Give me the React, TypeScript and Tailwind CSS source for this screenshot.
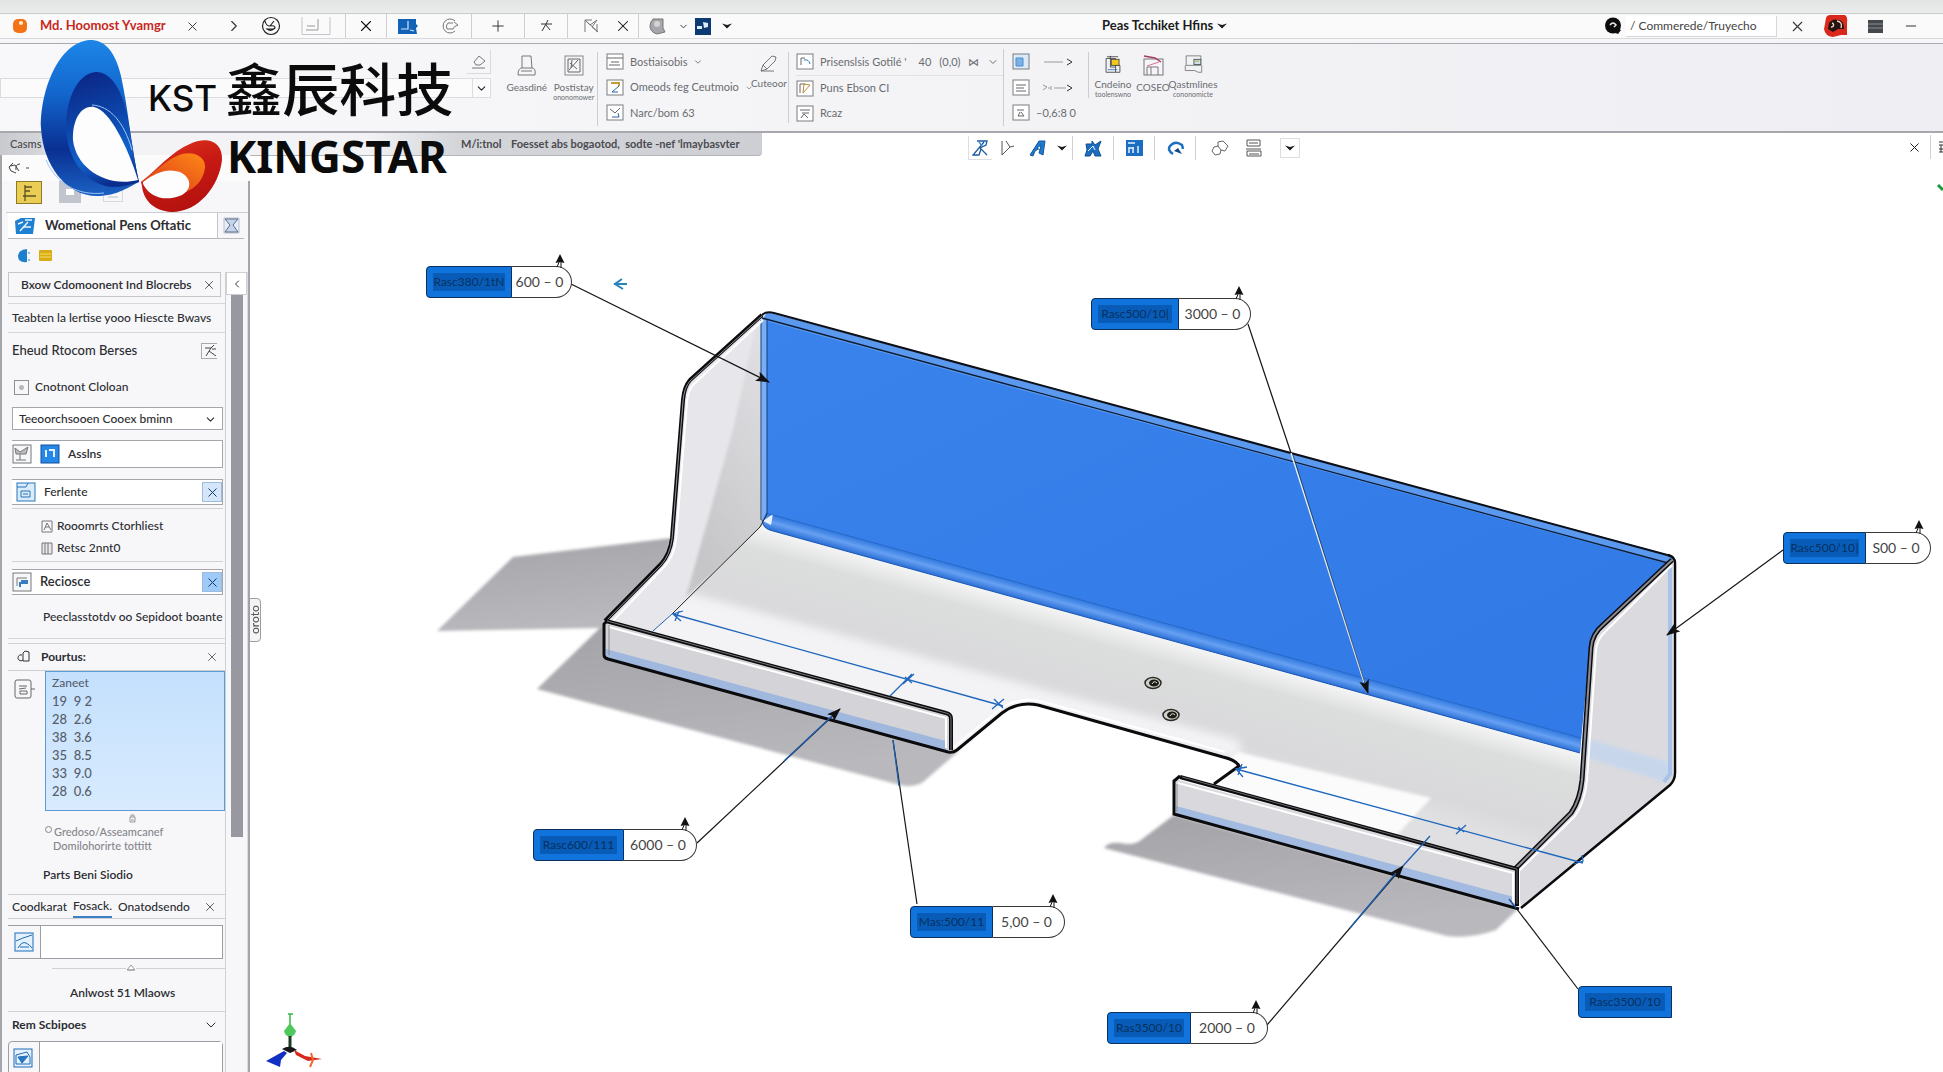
import type { ReactNode } from 'react';
import { ChevronDown, ChevronRight, ChevronLeft, Minus, Plus, X } from 'lucide-react';

type Callout = { x: number; y: number; labelW: number; label: string; valueW?: number; value?: string };

const callouts: Callout[] = [
  { x: 426, y: 266, labelW: 86, label: 'Rasc380/1tN', valueW: 60, value: '600 – 0' },
  { x: 1091, y: 298, labelW: 88, label: 'Rasc500/10|', valueW: 72, value: '3000 – 0' },
  { x: 1783, y: 532, labelW: 83, label: 'Rasc500/10]', valueW: 65, value: 'S00 – 0' },
  { x: 533, y: 829, labelW: 91, label: 'Rasc600/111', valueW: 73, value: '6000 – 0' },
  { x: 910, y: 906, labelW: 83, label: 'Mas:500/11', valueW: 72, value: '5,00 – 0' },
  { x: 1107, y: 1012, labelW: 84, label: 'Ras3500/10', valueW: 77, value: '2000 – 0' },
  { x: 1578, y: 986, labelW: 94, label: 'Rasc3500/10' },
];

const points = ['19  9 2', '28  2.6', '38  3.6', '35  8.5', '33  9.0', '28  0.6'];

// canvas starts below the ribbon and right of the side panel
const ORIGIN_X = 250;
const ORIGIN_Y = 155;

function Sep() {
  return <span className="h-6 w-px shrink-0 bg-[#cfd0d4]" />;
}

function ToolButton({ label, className, children }: { label: string; className: string; children: ReactNode }) {
  return (
    <button aria-label={label} className={`flex shrink-0 items-center justify-center ${className}`}>
      {children}
    </button>
  );
}

function TriDown() {
  return (
    <svg width="10" height="6" viewBox="0 0 10 6">
      <path d="M0 0.5L5 2L10 0.5L5 5.5Z" fill="#1b1b1b" />
    </svg>
  );
}

function TitleBar() {
  return (
    <div className="h-[30px] shrink-0 border-b border-[#a9abb0] bg-[#f6f6f8]">
      <div className="flex h-[25px] items-center border-b border-[#d8d9dc] bg-[#fafafb] text-[#333]">
        <div className="flex h-full items-center">
          <span className="flex w-10 shrink-0 justify-center">
            <svg width="16" height="16" viewBox="0 0 16 16">
              <rect x="1" y="1" width="14" height="14" rx="5" fill="#f47216" />
              <circle cx="9" cy="5" r="2" fill="#fff0d8" />
            </svg>
          </span>
          <span className="w-[132px] whitespace-nowrap text-[13px] font-bold text-[#c8281c]">Md. Hoomost Yvamgr</span>
          <ToolButton label="Close tab" className="w-10"><X size={15} strokeWidth={1.5} /></ToolButton>
          <ToolButton label="Next" className="w-[43px]"><ChevronRight size={18} strokeWidth={1.5} /></ToolButton>
          <ToolButton label="History" className="w-8">
            <svg width="20" height="20" viewBox="0 0 20 20" fill="none" stroke="#222" strokeWidth="1.2">
              <circle cx="10" cy="10" r="8.5" />
              <path d="M4 5Q5 10 9 10L13 5M9 10Q14 9 14 12Q10 16 6 13L12 13" />
            </svg>
          </ToolButton>
          <ToolButton label="Document" className="w-[58px]">
            <svg width="30" height="20" viewBox="0 0 30 20" fill="none" stroke="#999">
              <path d="M1 1V18.5H29V1" stroke="#c4c4c8" />
              <path d="M17 3V14H5M6 10H14" />
            </svg>
          </ToolButton>
          <Sep />
          <ToolButton label="Clear" className="w-10"><X size={18} strokeWidth={1.5} color="#111" /></ToolButton>
          <Sep />
          <ToolButton label="Part" className="w-[42px]">
            <svg width="20" height="17" viewBox="0 0 20 17">
              <path d="M0 1H18V6L20 8L18 10L19 16H0Z" fill="#1263b8" />
              <path d="M10 3V11H3M12 12L16 13" stroke="#cfe4fa" strokeWidth="1.2" fill="none" />
            </svg>
          </ToolButton>
          <ToolButton label="Rotate" className="w-[42px]">
            <svg width="18" height="16" viewBox="0 0 18 16" fill="none" stroke="#777">
              <path d="M14 3A7 7 0 1 0 14 13M12 5H7Q4 8 6 11H12Q13 8 17 7L13 4" />
            </svg>
          </ToolButton>
          <Sep />
          <ToolButton label="Add" className="w-[52px]"><Plus size={18} strokeWidth={1.3} /></ToolButton>
          <Sep />
          <ToolButton label="Fit" className="w-[42px]">
            <svg width="13" height="14" viewBox="0 0 13 14" fill="none" stroke="#333">
              <path d="M1 5H12M8 1L6 5L2 12M6 6L10 11" />
            </svg>
          </ToolButton>
          <Sep />
          <ToolButton label="Sketch" className="w-10 pl-2">
            <svg width="16" height="16" viewBox="0 0 16 16" fill="none" stroke="#777">
              <path d="M1 14V2H8M1 2L6 7L13 2L8 9L14 14ZM13 6V14" />
            </svg>
          </ToolButton>
          <ToolButton label="Remove" className="w-[30px]"><X size={18} strokeWidth={1.4} color="#111" /></ToolButton>
          <Sep />
          <ToolButton label="View style" className="w-9">
            <svg width="17" height="17" viewBox="0 0 17 17">
              <path d="M4 1H14V10L16 14L8 16Q1 14 1 8Q1 4 4 1Z" fill="#a6a7aa" stroke="#777" />
              <circle cx="8" cy="6" r="3" fill="#d4d4d6" />
            </svg>
          </ToolButton>
          <ToolButton label="View menu" className="w-4"><ChevronDown size={11} /></ToolButton>
          <ToolButton label="Scene" className="w-6">
            <svg width="16" height="17" viewBox="0 0 16 17">
              <rect width="16" height="17" fill="#0c3a72" />
              <path d="M2 8H7V11H2ZM8 4L13 5V9L9 10Z" fill="#dcebfa" />
            </svg>
          </ToolButton>
          <ToolButton label="Scene menu" className="w-6"><TriDown /></ToolButton>
        </div>
        <button className="ml-[363px] flex items-center gap-1 whitespace-nowrap text-[13px] font-bold text-[#1c1c1c]">
          Peas Tcchiket Hfins <TriDown />
        </button>
        <div className="ml-auto flex h-full items-center gap-1 pr-4">
          <svg width="18" height="18" viewBox="0 0 18 18">
            <circle cx="9" cy="8.5" r="8" fill="#0d0d0d" />
            <path d="M10 10L17 13L14 17L9 15Z" fill="#0d0d0d" />
            <path d="M6 8Q9 4 12 8L10 10" stroke="#eee" strokeWidth="1.5" fill="none" />
          </svg>
          <input
            aria-label="Search"
            defaultValue="/ Commerede/Truyecho"
            className="h-[21px] w-[151px] border-r border-b border-[#d5d5da] bg-white pl-1 text-xs text-[#444]"
          />
          <ToolButton label="Clear search" className="w-8"><X size={17} strokeWidth={1.5} /></ToolButton>
          <ToolButton label="Account" className="w-[38px]">
            <svg width="24" height="22" viewBox="0 0 24 22">
              <path d="M6 0H21Q24 2 23 8V20H17L9 22Q1 21 0 14Q1 9 2 3Q3 0 6 0Z" fill="#d9291d" />
              <path d="M5 8Q9 3 14 5Q20 5 20 14H14L9 17L4 14Z" fill="#241310" />
              <path d="M7 12A2 2 0 1 0 8 8M13 6Q19 7 17 13" stroke="#f3d9c0" fill="none" strokeWidth="1.4" />
            </svg>
          </ToolButton>
          <ToolButton label="Menu" className="w-8">
            <svg width="15" height="13" viewBox="0 0 15 13">
              <rect width="15" height="13" fill="#44474c" />
              <path d="M0 4H15M0 8H15" stroke="#8b8e94" />
            </svg>
          </ToolButton>
          <ToolButton label="Minimize" className="w-8"><Minus size={16} strokeWidth={1.5} /></ToolButton>
        </div>
      </div>
    </div>
  );
}

function RibbonIcon({ children, tint = '#fff' }: { children: ReactNode; tint?: string }) {
  return (
    <svg width="18" height="18" viewBox="0 0 18 18" fill="none" stroke="#666" className="shrink-0">
      <rect x="1" y="1" width="16" height="15" fill={tint} stroke="#7a7c80" />
      {children}
    </svg>
  );
}

function RibbonRow({ icon, text, menu }: { icon: ReactNode; text: string; menu?: boolean }) {
  return (
    <button className="flex h-[26px] items-center gap-1.5 whitespace-nowrap text-[11px] text-[#6a6c70]">
      {icon}
      {text}
      {menu && <ChevronDown size={10} />}
    </button>
  );
}

function RibbonBig({ icon, text, sub, className }: { icon: ReactNode; text: string; sub?: string; className: string }) {
  return (
    <button className={`-mt-1 flex flex-col items-center whitespace-nowrap pt-[7px] text-[#6a6c70] ${className}`}>
      {icon}
      <span className="mt-1 text-[10px] leading-3">{text}</span>
      {sub && <span className="text-[7px] leading-2">{sub}</span>}
    </button>
  );
}

function Ribbon() {
  return (
    <div className="flex h-[89px] shrink-0 border-b-2 border-[#a7a8ad] bg-gradient-to-r from-[#f8f8fa] to-[#efeff3]">
      <div className="flex w-[491px] shrink-0 flex-col items-end pt-1.5">
        <button aria-label="Erase" className="flex h-6 w-6 items-center justify-center border-r border-b border-[#dadade]">
          <svg width="16" height="16" viewBox="0 0 16 16" fill="none" stroke="#777">
            <path d="M8 2L14 7L9 11H5L3 8ZM1 14H14" />
          </svg>
        </button>
        <div className="mt-1 flex h-5 w-full items-center justify-end border border-[#dcdce0] bg-[#fbfbfc]">
          <button aria-label="Open list" className="flex h-full w-[18px] items-center justify-center border-l border-[#dcdce0]">
            <ChevronDown size={13} color="#222" />
          </button>
        </div>
      </div>
      <div className="my-2 ml-3 flex h-[74px] w-[95px] shrink-0 border-r border-[#cccdd2]">
        <RibbonBig
          className="w-12"
          text="Geasdiné"
          icon={
            <svg width="20" height="22" viewBox="0 0 20 22" fill="none" stroke="#777">
              <path d="M5 1H14L15 13H5ZM5 13Q1 13 1 20H18Q19 13 15 13M4 16H15" />
            </svg>
          }
        />
        <RibbonBig
          className="w-[47px]"
          text="Postistay"
          sub="ononomower"
          icon={
            <svg width="20" height="22" viewBox="0 0 20 22" fill="none" stroke="#888">
              <rect x="1" y="1" width="18" height="19" />
              <path d="M4 4H16V17H4ZM5 15L14 5M6 8L13 14M8 5L7 13" stroke="#666" />
            </svg>
          }
        />
      </div>
      <div className="my-[5px] flex w-[155px] shrink-0 flex-col pl-2">
        <RibbonRow menu text="Bostiaisobis" icon={<RibbonIcon><path d="M1 5H17M5 9H13M3 12H14" /></RibbonIcon>} />
        <RibbonRow menu text="Omeods feg Ceutmoio" icon={<RibbonIcon><path d="M5 4H13V7" stroke="#c79a3a" strokeWidth="2" /><path d="M13 7L6 13H12" stroke="#31639c" /></RibbonIcon>} />
        <RibbonRow text="Narc/bom 63" icon={<RibbonIcon><path d="M4 5L9 9L14 4" /><path d="M6 13H13L12 9" stroke="#31639c" /></RibbonIcon>} />
      </div>
      <div className="my-2 w-9 shrink-0 border-r border-[#cccdd2]">
        <RibbonBig
          className="w-8"
          text="Cuteoor"
          icon={
            <svg width="20" height="18" viewBox="0 0 20 18" fill="none" stroke="#777">
              <path d="M2 16L4 10L13 1L17 2L16 6L8 14ZM2 16H15M4 10L8 14" />
            </svg>
          }
        />
      </div>
      <div className="my-[5px] flex w-[215px] shrink-0 flex-col border-r border-[#cccdd2] pl-[7px]">
        <div className="flex items-center border-b border-[#e2e2e6]">
          <RibbonRow text="Prisenslsis Gotilé '" icon={<RibbonIcon><path d="M5 5V12M5 5H9" /><path d="M8 7Q13 6 14 11" stroke="#2f78c4" /></RibbonIcon>} />
          <span className="ml-3 flex items-center gap-2 text-[11px] text-[#6a6c70]">
            40 <span>(0,0)</span> ⋈ <ChevronDown size={12} />
          </span>
        </div>
        <RibbonRow text="Puns Ebson CI" icon={<RibbonIcon><path d="M4 13V4H9" /><path d="M8 4L14 5L7 13Z" stroke="#b98c32" /></RibbonIcon>} />
        <RibbonRow text="Rcaz" icon={<RibbonIcon><path d="M4 5H14M6 8H13M5 13L8 9L12 13" /></RibbonIcon>} />
      </div>
      <div className="my-[5px] flex w-[84px] shrink-0 flex-col pl-2">
        {['M4 5H11V13H4Z', 'M4 6H14M4 9H12M4 12H14'].map((d, i) => (
          <button key={d} aria-label="Line style" className="flex h-[26px] items-center gap-3">
            <RibbonIcon tint={i === 0 ? '#dce9f7' : '#fff'}><path d={d} stroke={i === 0 ? '#4a8ed0' : '#666'} fill={i === 0 ? '#7db0e2' : 'none'} /></RibbonIcon>
            <svg width="32" height="8" viewBox="0 0 32 8" fill="none" stroke="#777">
              <path d={i === 0 ? 'M2 4H21' : 'M1 1L5 3L1 6M6 4H8M9 2V6M12 4H24'} stroke="#999" />
              <path d="M25 1L30 4L25 7" stroke="#333" />
            </svg>
          </button>
        ))}
        <RibbonRow text="–0,6:8 0" icon={<RibbonIcon><path d="M5 6H12M8 8L6 12H12L9 8" /></RibbonIcon>} />
      </div>
      <div className="mt-2 flex h-[46px] border-l border-[#cccdd2] pl-1">
        <RibbonBig
          className="w-10"
          text="Cndeino"
          sub="toolenswno"
          icon={
            <svg width="18" height="22" viewBox="0 0 18 22" fill="none" stroke="#444">
              <path d="M1 4H12V20H1Z" fill="#eef2f8" /><path d="M12 12H17V20H12" /><rect x="7" y="5" width="9" height="7" fill="#f2c91a" /><path d="M2 2H15M6 1V14H12" /><path d="M3 17H14" stroke="#3a6fb0" />
            </svg>
          }
        />
        <RibbonBig
          className="w-10"
          text="COSEO"
          icon={
            <svg width="21" height="22" viewBox="0 0 21 22" fill="none" stroke="#777">
              <rect x="1" y="4" width="19" height="16" fill="#f6f4f8" /><path d="M1 1L12 3L18 7" stroke="#a33d5c" strokeWidth="1.5" /><path d="M4 11L16 7" stroke="#d9709c" /><path d="M4 20V12H15V20M8 12V20" />
            </svg>
          }
        />
        <RibbonBig
          className="w-10"
          text="Qastmlines"
          sub="cononomicte"
          icon={
            <svg width="21" height="22" viewBox="0 0 21 22" fill="none" stroke="#777">
              <path d="M2 1H19V12H2ZM1 12V18H12L16 20H20V12" fill="#f1f2f4" /><rect x="11" y="5" width="8" height="6" fill="#cfe0e8" stroke="#455" /><path d="M12 7H17" stroke="#b9a02c" />
            </svg>
          }
        />
      </div>
    </div>
  );
}

function TabStrip() {
  return (
    <div className="flex h-[22px] shrink-0 items-start">
      <div className="flex h-[23px] w-[762px] shrink-0 items-center whitespace-nowrap rounded-br border-b border-[#b4b5ba] bg-[linear-gradient(90deg,#c9cacf_0,#d4d5d9_5%,#f3f3f5_9%,#f3f3f5_48%,#d3d5d9_60%,#cdcfd4_100%)] text-[11px] font-bold text-[#4a4b50]">
        <span className="w-[461px] pl-2.5 font-medium">Casms</span>
        <span className="w-[50px]">M/i:tnol</span>
        <span>Foesset abs bogaotod,&nbsp; sodte -nef 'lmaybasvter</span>
      </div>
      <div className="relative ml-[206px] mt-[3px] flex h-6 items-center">
        <ToolButton label="Zoom fit" className="h-full w-6 border-b border-l border-[#dedee2]">
          <svg width="18" height="18" viewBox="0 0 18 18" fill="none" stroke="#1d5c9e" strokeWidth="1.3">
            <path d="M5 2H15L14 6L8 9L15 16M12 3L1 16H7L9 10" /><path d="M7 3L10 7" stroke="#3b8be0" />
          </svg>
        </ToolButton>
        <ToolButton label="Select" className="w-8">
          <svg width="14" height="16" viewBox="0 0 14 16" fill="none" stroke="#444"><path d="M5 1L9 7L13 6M9 7L1 15M1 1V15" strokeWidth="0.9" /></svg>
        </ToolButton>
        <ToolButton label="Section view" className="w-7">
          <svg width="18" height="18" viewBox="0 0 18 18" fill="#1c7bd0" stroke="#16599c"><path d="M1 16L10 2H16L14 16L10 14L12 8L6 12L4 17Z" /><path d="M8 9L12 6L11 11Z" fill="#fff" /></svg>
        </ToolButton>
        <ToolButton label="View options" className="w-5"><TriDown /></ToolButton>
        <Sep />
        <ToolButton label="Display" className="w-10">
          <svg width="18" height="17" viewBox="0 0 18 17" fill="#1a6fc2" stroke="#134f8c"><path d="M2 4H8V1L11 5L17 1L14 9L17 16H11L9 11L6 16H1L3 10Z" /><path d="M4 11L9 6L11 10" fill="none" stroke="#fff" /></svg>
        </ToolButton>
        <Sep />
        <ToolButton label="Scene" className="w-10">
          <svg width="17" height="18" viewBox="0 0 17 18"><rect y="1" width="17" height="16" fill="#1a6fc2" /><path d="M2 4H9M3 8V14M7 8V14M3 9H8M12 7V14" stroke="#e6f2ff" strokeWidth="1.5" fill="none" /></svg>
        </ToolButton>
        <Sep />
        <ToolButton label="Rotate view" className="w-10">
          <svg width="17" height="17" viewBox="0 0 17 17" fill="none" stroke="#1a6fc2" strokeWidth="2.5"><path d="M6 14Q0 10 3 6Q8 0 15 5L16 9" /><path d="M7 11L11 8L15 14Z" fill="#114a86" stroke="none" /></svg>
        </ToolButton>
        <Sep />
        <ToolButton label="Hide" className="w-12">
          <svg width="18" height="16" viewBox="0 0 18 16" fill="none" stroke="#555"><path d="M7 2L12 1L17 6L14 11L10 10L9 14L4 15L1 11L3 7L7 6ZM7 6L10 10" strokeWidth="0.9" /></svg>
        </ToolButton>
        <ToolButton label="Layers" className="w-5">
          <svg width="18" height="18" viewBox="0 0 18 18" fill="none" stroke="#555"><path d="M2 1H15V7H2ZM1 10H16M2 12H16V17H2ZM4 4H13M4 15H14" /></svg>
        </ToolButton>
        <ToolButton label="More" className="ml-4 h-5 w-5 border border-[#dedee2]">
          <TriDown />
        </ToolButton>
      </div>
      <div className="ml-auto mt-1 flex h-5 items-center">
        <ToolButton label="Close view" className="w-8"><X size={15} strokeWidth={1.6} color="#222" /></ToolButton>
        <Sep />
        <span className="w-3 overflow-hidden pl-2">
          <svg width="12" height="12" viewBox="0 0 12 12" stroke="#333" fill="none"><path d="M0 1H6M0 4H6M0 8H6M0 11H6M2 4V11" /></svg>
        </span>
      </div>
    </div>
  );
}

function PanelIcon({ children, tone = '#777', fill = '#f6f7f9' }: { children: ReactNode; tone?: string; fill?: string }) {
  return (
    <svg width="20" height="20" viewBox="0 0 20 20" fill="none" stroke={tone} className="shrink-0">
      <rect x="1" y="1" width="18" height="18" fill={fill} />
      {children}
    </svg>
  );
}

function CloseBox({ className }: { className: string }) {
  return (
    <button aria-label="Clear" className={`ml-auto flex h-5 w-5 items-center justify-center border border-[#9dbbdd] ${className}`}>
      <X size={15} strokeWidth={1.6} color="#163a66" />
    </button>
  );
}

function SidePanel() {
  return (
    <aside className="relative flex w-[250px] shrink-0 flex-col border-l-2 border-[#a4a5aa] bg-[#f7f7fa] text-xs font-medium text-[#2c2d31]">
      <div className="flex h-[26px] shrink-0 items-center bg-[#fbfbfc] pl-1.5 text-[#444]">
        <svg width="24" height="12" viewBox="0 0 24 12" fill="none" stroke="#444">
          <path d="M5 1L1 5L3 9L8 11M2 4L7 3L11 9M12 2Q7 2 8 8M18 6H21" />
        </svg>
      </div>
      <div className="flex min-h-0 flex-1 flex-col border-r-2 border-[#a4a5aa]">
        <div className="ml-1 flex h-8 shrink-0 items-start border-b border-[#cccdd2]">
          <ToolButton label="Feature tree" className="ml-2.5 h-[23px] w-[26px] border border-[#8d7a25] bg-[#e9cd55]">
            <svg width="18" height="18" viewBox="0 0 18 18" fill="none" stroke="#5c5220"><path d="M5 1V17M5 3H12M5 7H10M3 12H16" strokeWidth="1.3" /></svg>
          </ToolButton>
          <ToolButton label="Properties" className="ml-[17px] h-[22px] w-[22px] bg-[#c3c5ce]">
            <svg width="10" height="8" viewBox="0 0 10 8"><rect x="1" y="1" width="8" height="6" fill="#fff" /></svg>
          </ToolButton>
          <ToolButton label="Configurations" className="ml-[22px] h-[21px] w-5 border border-[#d8d8dc]">
            <svg width="14" height="14" viewBox="0 0 14 14" fill="none" stroke="#bbb"><path d="M1 4L6 9L12 3M2 12H12" /></svg>
          </ToolButton>
        </div>
        <div className="ml-1.5 mr-1 flex h-[26px] shrink-0 items-center border-b border-[#b6b7bc]">
          <div className="flex h-full flex-1 items-center border-r border-[#c3c4c9] bg-white pl-[7px]">
            <svg width="20" height="18" viewBox="0 0 20 18"><path d="M0 4L6 1H20L18 17H1Z" fill="#1f7fd0" /><path d="M3 7L8 5M5 14L13 5M9 10H16M10 3H17" stroke="#eaf5ff" strokeWidth="1.5" /></svg>
            <input aria-label="Feature name" defaultValue="Wometional Pens Oftatic" className="ml-2.5 w-40 bg-transparent text-[13px] font-bold" />
          </div>
          <ToolButton label="Filter" className="w-[26px]">
            <svg width="17" height="17" viewBox="0 0 17 17" fill="#c4d4ea" stroke="#5b6c86"><path d="M1 1H16V16H1Z" fill="#e8eef7" stroke="#b5c0d0" /><path d="M2 2H15L10 8L15 15H2L7 8Z" /></svg>
          </ToolButton>
        </div>
        <div className="flex h-[33px] shrink-0 items-center gap-2 pl-[15px]">
          <svg width="14" height="14" viewBox="0 0 14 14"><path d="M10 0V13Q1 14 1 7Q1 1 10 0Z" fill="#1d80cf" /><path d="M12 3V5M12 10V12" stroke="#1d80cf" /></svg>
          <svg width="13" height="11" viewBox="0 0 13 11"><rect width="13" height="11" rx="1" fill="#d8ac12" /><path d="M1 4H12M1 7H12" stroke="#f5e06a" /></svg>
        </div>
        <div className="flex min-h-0 flex-1">
          <div className="flex w-[224px] shrink-0 flex-col overflow-hidden border-r border-[#cfd0d4] pl-1.5">
            <div className="mr-1 flex h-[25px] shrink-0 items-center whitespace-nowrap border border-[#c6c7cc] pl-3 font-semibold">
              Bxow Cdomoonent Ind Blocrebs
              <button aria-label="Close" className="ml-auto mr-1"><X size={14} strokeWidth={1.3} /></button>
            </div>
            <p className="mt-[6px] flex h-[30px] shrink-0 items-center whitespace-nowrap border-y border-[#d6d7db] pl-1">Teabten la lertise yooo Hiescte Bwavs</p>
            <div className="flex h-[36px] shrink-0 items-center pl-1 pr-2 text-[13px]">
              Eheud Rtocom Berses
              <button aria-label="Pick" className="ml-auto h-4 w-4 border border-r-0 border-[#a8a9ae]">
                <svg width="15" height="14" viewBox="0 0 15 14" fill="none" stroke="#444"><path d="M3 4H9L12 1M9 4L4 12M7 7L14 12M10 5L14 5" /></svg>
              </button>
            </div>
            <label className="flex h-[36px] shrink-0 items-center gap-1.5 pl-1.5">
              <input type="checkbox" className="h-[15px] w-[15px] appearance-none border border-[#8f9095] bg-[radial-gradient(circle,#b5b6ba_0_2px,#f7f7fa_3px)]" />
              Cnotnont Cloloan
            </label>
            <div className="relative ml-1 mr-0.5 mt-[2px] h-[23px] shrink-0">
              <select aria-label="Constraint" className="h-full w-full appearance-none border border-[#a5a6ab] bg-white pl-1.5">
                <option>Teeoorchsooen Cooex bminn</option>
              </select>
              <ChevronDown size={13} className="pointer-events-none absolute right-1.5 top-1.5" />
            </div>
            <div className="ml-1 mr-0.5 mt-[10px] flex h-7 shrink-0 items-center gap-2 border border-l-0 border-[#a5a6ab] bg-white">
              <span className="flex"><PanelIcon><path d="M3 4L8 8L16 3L14 10H4ZM8 10V16M4 16H14" fill="#bbb" /></PanelIcon></span>
              <PanelIcon tone="#0f529e" fill="#2687e6"><path d="M6 6V13M9 6H14V13" stroke="#e4f1ff" strokeWidth="2" /></PanelIcon>
              <span className="font-semibold">Asslns</span>
            </div>
            <div className="ml-1 mr-0.5 mt-[11px] flex h-[26px] shrink-0 items-center gap-2 border border-l-0 border-[#a5a6ab] bg-white pl-1">
              <PanelIcon tone="#2774bd" fill="#dcebfa"><path d="M1 5H10L12 1M5 9H14V15H5ZM7 12H12" /></PanelIcon>
              <span>Ferlente</span>
              <CloseBox className="bg-[#d5e6fa]" />
            </div>
            <div className="ml-1 mr-0.5 mt-[3px] flex h-[54px] shrink-0 flex-col justify-center gap-1.5 border-y border-[#d0d1d5] pl-[29px] pt-1">
              <span className="flex items-center gap-1 leading-4">
                <svg width="12" height="13" viewBox="0 0 12 13" fill="none" stroke="#777"><path d="M1 1H11V12H1ZM6 3L3 10M6 3L10 10M4 7H8" /></svg>
                Rooomrts Ctorhliest
              </span>
              <span className="flex items-center gap-1 leading-4">
                <svg width="12" height="13" viewBox="0 0 12 13" fill="#e8e8ee" stroke="#777"><path d="M1 1H11V12H1ZM4 1V12M7 1V12" /></svg>
                Retsc 2nnt0
              </span>
            </div>
            <div className="ml-1 mr-0.5 mt-[7px] flex h-[26px] shrink-0 items-center gap-2 border border-l-0 border-[#a5a6ab] bg-white">
              <PanelIcon><path d="M5 6H15M5 6V14" /><path d="M9 9H15V11H8V15" stroke="#3a7cc0" strokeWidth="2" /></PanelIcon>
              <span className="text-[13px] font-semibold">Reciosce</span>
              <CloseBox className="bg-[#9dcaf7]" />
            </div>
            <p className="flex h-[44px] shrink-0 items-center whitespace-nowrap border-b border-[#d6d7db] pl-[35px]">Peeclasstotdv oo Sepidoot boante</p>
            <div className="mt-1 flex h-7 shrink-0 items-center border-y border-[#cfd0d4] pl-2">
              <svg width="16" height="14" viewBox="0 0 16 14" fill="none" stroke="#333"><path d="M6 5A3 3 0 1 0 7 10M7 3V11H13V2L9 1Z" /></svg>
              <span className="ml-[9px] font-bold">Pourtus:</span>
              <button aria-label="Close section" className="ml-auto mr-1.5"><X size={14} strokeWidth={1.2} /></button>
            </div>
            <div className="flex h-[140px] shrink-0">
              <div className="w-[37px] pl-1.5 pt-2">
                <svg width="21" height="20" viewBox="0 0 21 20" fill="none" stroke="#666"><rect x="1" y="1" width="16" height="18" rx="2" /><path d="M17 10H21M5 7H13M5 10L12 9M6 15V12H13V15Z" /></svg>
              </div>
              <ul className="flex-1 whitespace-pre border border-[#5b9bd8] bg-gradient-to-b from-[#c4e0fd] to-[#d8ebfe] pl-1.5 pt-[3px] text-[13px] text-[#56606c]">
                <li className="h-[17px] text-xs leading-4">Zaneet</li>
                {points.map((p) => (
                  <li key={p} className="h-[18px] leading-[18px]">{p}</li>
                ))}
              </ul>
            </div>
            <div className="flex h-[14px] shrink-0 justify-center pl-8 pt-[3px]">
              <svg width="7" height="9" viewBox="0 0 7 9" fill="none" stroke="#999"><path d="M1 3H6V8H1ZM2 3V1H5V3M2 6H5" /></svg>
            </div>
            <div className="h-[31px] shrink-0 pl-[37px] text-[11px] leading-[14px] text-[#85868b]">
              <label className="flex gap-0.5">
                <input type="radio" className="mt-px h-[7px] w-[7px] appearance-none rounded-full border border-[#888]" />
                Gredoso/Asseamcanef
              </label>
              <p className="pl-2">Domilohorirte tottitt</p>
            </div>
            <p className="flex h-[37px] shrink-0 items-center pl-[35px] font-semibold">Parts Beni Siodio</p>
            <div className="mt-px flex h-[25px] shrink-0 items-center gap-1.5 whitespace-nowrap border-y border-[#cfd0d4] pl-1">
              <button>Coodkarat</button>
              <button className="h-full border-b-2 border-[#3c7fc6]">Fosack.</button>
              <button>Onatodsendo</button>
              <button aria-label="Close tabs" className="ml-auto mr-2"><X size={14} strokeWidth={1.3} /></button>
            </div>
            <div className="mr-0.5 mt-[6px] flex h-[34px] shrink-0 items-center border border-l-0 border-[#9d9ea3] pl-1.5">
              <PanelIcon tone="#1f6db8" fill="#e4f1fd"><path d="M2 9L9 6L18 3M4 16Q8 9 12 11T18 16M6 15H15" /></PanelIcon>
              <input aria-label="Face" className="ml-1.5 h-full w-0 flex-1 border-l border-[#9d9ea3] bg-white" />
            </div>
            <div className="ml-11 mt-[2px] flex h-[14px] shrink-0 items-center">
              <span className="h-px w-[74px] bg-[#d0d1d5]" />
              <svg width="10" height="8" viewBox="0 0 10 8" fill="#fff" stroke="#999"><path d="M1 6L5 1L9 6ZM2 6H8" /></svg>
              <span className="h-px flex-1 bg-[#d0d1d5]" />
            </div>
            <p className="flex h-[36px] shrink-0 items-center pl-[62px] font-semibold">Anlwost 51 Mlaows</p>
            <div className="flex h-[27px] shrink-0 items-center border-t border-[#cfd0d4] pl-1 font-bold">
              Rem Scbipoes
              <button aria-label="Expand" className="ml-auto mr-1.5"><ChevronDown size={16} strokeWidth={1.5} /></button>
            </div>
            <div className="mr-0.5 mt-[3px] flex h-[34px] shrink-0 items-center rounded-t border border-[#9d9ea3] pl-1">
              <PanelIcon tone="#1f6db8" fill="#e4f1fd"><path d="M3 7L14 4L17 9V16H3Z" /><path d="M5 9L15 8L9 15Z" fill="#2a78c4" /></PanelIcon>
              <input aria-label="Edge" className="ml-1.5 h-full w-0 flex-1 border-l border-[#9d9ea3] bg-white" />
            </div>
          </div>
          <div className="flex flex-1 flex-col items-center border-r border-[#dcdce0]">
            <button aria-label="Collapse" className="flex h-[23px] w-full shrink-0 items-center justify-center border border-[#cfd0d4] bg-white">
              <ChevronLeft size={12} color="#333" />
            </button>
            <div className="h-[542px] w-3 bg-[#9899a0]" />
          </div>
        </div>
      </div>
      <button className="absolute -right-[11px] top-[443px] h-11 w-3 rounded-l border border-[#9d9ea3] bg-[#f4f4f6] text-xs leading-[10px] text-[#555] [writing-mode:vertical-rl] rotate-180">
        oroto
      </button>
    </aside>
  );
}

function CalloutTag({ item }: { item: Callout }) {
  return (
    <div
      className="absolute flex h-8 items-stretch"
      style={{ left: item.x - ORIGIN_X, top: item.y - ORIGIN_Y }}
    >
      <button
        className="flex items-center justify-center rounded-l border border-[#0d2f5c] bg-[#1173dc] p-1.5"
        style={{ width: item.labelW }}
      >
        <span className="flex h-full w-full items-center justify-center bg-[#085cb8] text-xs text-[#06315f]">{item.label}</span>
      </button>
      {item.value && (
        <span
          className="relative flex items-center justify-center whitespace-nowrap rounded-r-full border border-l-0 border-[#3a3a3a] bg-white pr-1 text-sm text-[#444]"
          style={{ width: item.valueW }}
        >
          {item.value}
          <svg width="10" height="14" viewBox="0 0 10 14" className="absolute -top-[13px] right-1.5">
            <path d="M5 0L9.5 9L5 8L0.5 9Z" fill="#111" />
            <path d="M5 6L2 13M6 6V14" stroke="#111" fill="none" />
          </svg>
        </span>
      )}
    </div>
  );
}

function Model() {
  return (
    <svg width="1693" height="917" viewBox="250 155 1693 917" fill="none" className="block">
      <defs>
        <filter id="soft" x="-10%" y="-10%" width="120%" height="120%"><feGaussianBlur stdDeviation="1.500" /></filter>
        <filter id="softer" x="-20%" y="-20%" width="140%" height="140%"><feGaussianBlur stdDeviation="5" /></filter>
        <linearGradient id="shadow" x1="0" y1="0" x2="0.300" y2="1">
          <stop offset="0" stopColor="#a2a2a7" /><stop offset="1" stopColor="#b9b9bd" />
        </linearGradient>
        <linearGradient id="back" x1="0" y1="0" x2="1" y2="1">
          <stop offset="0" stopColor="#3a83ec" /><stop offset="1" stopColor="#3079e6" />
        </linearGradient>
        <linearGradient id="bend" gradientUnits="userSpaceOnUse" x1="1000" y1="577.600" x2="995.970" y2="592.200">
          <stop offset="0" stopColor="#2f78df" /><stop offset="0.500" stopColor="#66a0f2" /><stop offset="1" stopColor="#2b6fd6" />
        </linearGradient>
        <linearGradient id="floor" gradientUnits="userSpaceOnUse" x1="1000" y1="590" x2="972.400" y2="690">
          <stop offset="0" stopColor="#f8f8f9" /><stop offset="0.250" stopColor="#dcdddd" /><stop offset="0.800" stopColor="#d9d9db" /><stop offset="1" stopColor="#e0e0e2" />
        </linearGradient>
        <linearGradient id="shade" x1="1" y1="0" x2="0.600" y2="1">
          <stop offset="0" stopColor="#e2e2e6" /><stop offset="1" stopColor="#c6c6c8" />
        </linearGradient>
        <clipPath id="floorClip">
          <path d="M762 525L1580 752L1579 790L1570 815L1515 868L1213 784L1239 763L1223 755L1038 703Q1020 700 1002 712L954 752L950 714L607 621Z" />
        </clipPath>
        <clipPath id="leftClip"><path d="M762 318L687 385L683 400L672 540L663 562L607 620L653 631L762 525Z" /></clipPath>
        <marker id="tip" viewBox="0 0 14 10" refX="13" refY="5" markerWidth="14" markerHeight="10" markerUnits="userSpaceOnUse" orient="auto"><path d="M0 0L14 5L0 10L3 5Z" fill="#111" /></marker>
      </defs>

      {/* ground shadows */}
      <g fill="url(#shadow)" filter="url(#soft)">
        <path d="M437 631L513 557L672 538L664 564L600 628Z" />
        <path d="M537 689L604 624L604 657L949 752L960 750L922 783Q912 788 900 785Z" />
        <path d="M1104 848Q1108 842 1120 843Q1134 846 1141 840L1174 815L1518 909L1496 930Q1470 939 1447 936Z" />
      </g>

      {/* floor */}
      <path d="M762 525L1580 752L1579 790L1570 815L1515 868L1213 784L1239 763L1223 755L1038 703Q1020 700 1002 712L954 752L950 714L607 621Z" fill="url(#floor)" />
      <g clipPath="url(#floorClip)">
        <path d="M685 592L1045 690L1240 740L1240 760L1020 710L950 765L600 640Z" fill="#f3f3f5" filter="url(#softer)" />
        <path d="M1238 752L1431 798L1396 836L1200 784Z" fill="#fbfbfc" filter="url(#soft)" />
      </g>

      {/* left wall */}
      <path d="M762 316L687 384Q684 390 683 400L672 540Q669 556 660 566L607 620L653 631L762 525Z" fill="#e7e7eb" />
      <g clipPath="url(#leftClip)">
        <path d="M756 325L733 430L686 597L766 527V325Z" fill="url(#shade)" filter="url(#soft)" />
        <path d="M758 318V525" stroke="#fafafc" strokeWidth="5" filter="url(#softer)" />
      </g>

      {/* back panel */}
      <path d="M767 314L1674 558L1600 628L1590 647L1580 752L770 530Q762 528 762 520V320Z" fill="url(#back)" />
      <path d="M767 312L1674 556L1668 564L762 320Z" fill="#5b99ee" />
      <path d="M761 320H767V514L762 520Z" fill="#78aef5" />
      <path d="M766 513L1581 738L1580 753L770 530Q763 527 762 520Z" fill="url(#bend)" />
      <path d="M763 521L773 514L771 525Z" fill="#e8f2ff" />
      <path d="M766 513L1581 738" stroke="#2a68c8" />
      <path d="M762 520Q763 529 773 531L1580 753" stroke="#1a56b4" />
      <path d="M761 320V520M767 319V514" stroke="#143a78" />
      <path d="M767 514L760 527L672 614" stroke="#222" />
      <path d="M672 614L653 631" stroke="#1d5fae" />
      <path d="M762 318L1668 563" stroke="#0d1b33" strokeWidth="1.300" />
      <path d="M762 315Q766 311 774 313L1671 556" stroke="#0b0f18" strokeWidth="2" />

      {/* left wall edge */}
      <path d="M762 315L690 380Q684 387 683 400L672 538Q670 554 661 564L605 621" stroke="#0c0c0e" strokeWidth="4" strokeLinejoin="round" />
      <path d="M762 316L690 381Q684 388 683 401L672 539Q670 555 661 565L606 621" stroke="#8e8e96" strokeWidth="1" />
      <path d="M763 320L694 384Q688 390 687 402L676 540Q674 556 665 566L613 621" stroke="#fff" strokeWidth="2" />

      {/* left lip */}
      <path d="M604 622L950 714V752L604 657Z" fill="#d3d3d8" />
      <path d="M606 649L946 741V752L606 657Z" fill="#a0b8de" />
      <path d="M609 627L946 718V748" stroke="#fff" strokeWidth="2" />
      <path d="M609 625V655" stroke="#8b8b92" />
      <path d="M607 621L604 624V655Q604 658 608 659L948 752Q953 753 957 750L1002 713Q1018 701 1038 705L1223 757Q1236 760 1239 766L1214 784" stroke="#0b0b0d" strokeWidth="3" />
      <path d="M954 747L1001 708Q1018 697 1040 701L1225 752" stroke="#fff" strokeWidth="2" />
      <path d="M606 621L946 713Q951 714 951 719V750" stroke="#0b0b0d" strokeWidth="4" />
      <path d="M607 621L946 713Q951 714 951 719V750" stroke="#77777d" />

      {/* right wall */}
      <path d="M1673 562V773Q1674 780 1668 785L1521 908L1516 869L1570 815Q1579 800 1580 780L1590 647Q1591 636 1601 626Z" fill="#dadadf" />
      <path d="M1584 738L1668 762L1672 774L1665 782L1582 756Z" fill="#c4d6f0" opacity="0.800" filter="url(#soft)" />
      <path d="M1670 568V774L1664 782" stroke="#a9c3e8" strokeWidth="4" />
      <path d="M1672 565L1606 631Q1597 639 1596 650L1587 780Q1585 802 1575 816L1519 871V905" stroke="#fff" strokeWidth="2" />
      <path d="M1672 560L1603 625Q1592 634 1591 648L1582 780Q1580 800 1571 813L1515 869" stroke="#0b0b0d" strokeWidth="5" />
      <path d="M1672 560L1603 625Q1592 634 1591 648L1582 780Q1580 800 1571 813L1515 869" stroke="#8a8a92" strokeWidth="2" />
      <path d="M1668 555Q1675 557 1675 563V773Q1675 780 1670 785L1521 908" stroke="#0b0b0d" strokeWidth="2.500" />

      {/* right lip */}
      <path d="M1175 779L1516 870V908L1174 815Z" fill="#d8d8dd" />
      <path d="M1176 806L1514 897V907L1176 815Z" fill="#a3bbe0" />
      <path d="M1178 783L1513 873V904" stroke="#fff" strokeWidth="2" />
      <path d="M1177 784V812" stroke="#8b8b92" />
      <path d="M1180 776L1174 781V814L1519 909" stroke="#0b0b0d" strokeWidth="3" />
      <path d="M1180 777L1517 869V906" stroke="#0b0b0d" strokeWidth="4" />
      <path d="M1182 777L1517 869V904" stroke="#66666c" />

      {/* screw holes */}
      {[[1153, 683], [1171, 715]].map(([x, y]) => (
        <g key={x}>
          <ellipse cx={x} cy={y} rx="8" ry="5.500" fill="#cfcfc8" stroke="#2a2a24" strokeWidth="1.500" />
          <ellipse cx={x + 1} cy={y} rx="5" ry="3.500" fill="#1d1d18" />
          <path d={`M${x - 1} ${y + 1}Q${x + 1} ${y - 3} ${x + 4} ${y}`} stroke="#e6e6dd" />
        </g>
      ))}

      {/* dimension lines */}
      <g stroke="#1f67bd" strokeWidth="1.300">
        <path d="M673 614L1003 706M683 611L673 614L681 621M679 611L675 621" />
        <path d="M903 684L914 674M905 677L912 683M890 696L912 674M992 709L1004 699M994 699L1003 708" />
        <path d="M1236 769L1583 863M1247 767L1236 769L1243 777M1242 764L1238 775M1456 834L1466 825M1458 827L1464 832M1574 864L1583 861L1582 855" />
      </g>

      {/* leaders */}
      <g stroke="#161616" strokeWidth="1.200">
        <path d="M571 284L769 382" markerEnd="url(#tip)" />
        <path d="M1248 324L1291 453" />
        <path d="M1291 453L1364 682" stroke="#e6edf5" strokeWidth="1.500" />
        <path d="M1293 455L1368 693" strokeWidth="0.600" markerEnd="url(#tip)" />
        <path d="M1783 550L1667 635" markerEnd="url(#tip)" />
        <path d="M697 843L840 709" markerEnd="url(#tip)" />
        <path d="M893 740L917 904" />
        <path d="M1267 1025L1403 866" markerEnd="url(#tip)" />
        <path d="M1578 989L1510 900" />
      </g>
      <path d="M784 761L832 716M1350 928L1396 873M1403 866L1430 836M893 740L899 786M1509 899L1516 908" stroke="#1f5faf" strokeWidth="1.300" />
      <path d="M614 284H627M622 279L615 284L623 289" stroke="#2a84b8" strokeWidth="2" />

      {/* axis triad */}
      <path d="M290 1014V1026M288 1014H293" stroke="#39b54a" strokeWidth="1.500" />
      <path d="M290 1023L296 1031Q295 1036 290 1037Q285 1036 284 1031Z" fill="#4fc95e" />
      <path d="M290 1036V1050" stroke="#1b3a24" strokeWidth="3" />
      <path d="M282 1049Q290 1044 297 1050L290 1053Z" fill="#15151a" />
      <path d="M284 1051L266 1061L280 1067L281 1060L287 1053Z" fill="#1330c4" />
      <path d="M294 1050L305 1056L322 1059L308 1061L296 1055Z" fill="#d8281c" />
      <path d="M311 1053L313 1060L310 1067" stroke="#f0682a" strokeWidth="2" />

      <path d="M1938 185L1943 190" stroke="#1c9a3a" strokeWidth="3" />
    </svg>
  );
}

function BrandMark() {
  return (
    <div className="pointer-events-none absolute left-10 top-10 flex">
      <svg width="184" height="174" viewBox="40 40 184 174" className="shrink-0">
        <defs>
          <linearGradient id="blueOuter" x1="0.300" y1="0" x2="0.300" y2="1">
            <stop offset="0" stopColor="#1d86e8" /><stop offset="0.350" stopColor="#1265cc" /><stop offset="0.700" stopColor="#0a2f92" /><stop offset="1" stopColor="#1b62c4" />
          </linearGradient>
          <linearGradient id="blueInner" x1="0.300" y1="0" x2="0.500" y2="1">
            <stop offset="0" stopColor="#0b2786" /><stop offset="0.400" stopColor="#0c43a8" /><stop offset="0.750" stopColor="#1262cc" /><stop offset="1" stopColor="#0a2c8c" />
          </linearGradient>
          <linearGradient id="redOuter" x1="0" y1="0" x2="0.400" y2="1">
            <stop offset="0" stopColor="#e0381e" /><stop offset="0.500" stopColor="#c81a14" /><stop offset="1" stopColor="#b5120f" />
          </linearGradient>
          <linearGradient id="orange" x1="0" y1="1" x2="1" y2="0">
            <stop offset="0" stopColor="#d8321a" /><stop offset="1" stopColor="#ff8a16" />
          </linearGradient>
        </defs>
        <path d="M139 182C131 145 128 108 121 76C115 50 104 40 90 40C58 42 40 92 41 128C43 165 66 196 97 196C118 196 130 186 139 182Z" fill="url(#blueOuter)" />
        <path d="M139 182C131 145 130 122 123 100C116 80 106 72 96 72C78 73 66 98 66 128C67 158 84 184 112 187C124 187 132 184 139 182Z" fill="url(#blueInner)" />
        <path d="M138 180C128 148 110 110 94 107C79 105 72 124 73 140C76 168 106 188 138 180Z" fill="#fdfdfe" />
        <path d="M92 105C110 106 124 122 132 150M46 160C56 184 78 196 104 193" stroke="#9cc4f4" strokeWidth="1" fill="none" />
        <path d="M141 182C156 171 170 152 192 143C208 136 223 142 222 160C219 187 198 212 172 212C152 211 143 198 142 186Z" fill="url(#redOuter)" />
        <path d="M141 182C156 171 168 158 182 154C196 151 206 158 205 168C203 181 195 188 186 192Z" fill="url(#orange)" />
        <path d="M143 182C156 172 168 168 180 172C192 178 192 189 182 195C166 202 150 198 143 184Z" fill="#fdfdfe" />
      </svg>
      <div className="-ml-[76px] pt-3 text-[#0b0b0c]">
        <div className="flex items-baseline gap-2 whitespace-nowrap leading-[68px]">
          <span className="font-[Inter] text-[35px] font-medium">KST</span>
          <span className="font-['Noto_Sans_CJK_SC',sans-serif] text-[57px] font-medium">鑫辰科技</span>
        </div>
        <div className="-mt-1 ml-[79px] font-['Noto_Sans',sans-serif] text-[44px] font-bold leading-[56px]">KINGSTAR</div>
      </div>
    </div>
  );
}

export default function App() {
  return (
    <div className="relative flex h-screen flex-col overflow-hidden bg-white font-[Lato,'Noto_Sans_CJK_SC',sans-serif]">
      <div className="h-3.5 shrink-0 border-b border-[#c9cbcd] bg-gradient-to-b from-[#e2e4e4] to-[#ebecec]" />
      <TitleBar />
      <Ribbon />
      <TabStrip />
      <div className="flex min-h-0 flex-1">
        <SidePanel />
        <main className="relative min-w-0 flex-1 overflow-hidden">
          <Model />
          {callouts.map((item) => (
            <CalloutTag key={item.label + item.x} item={item} />
          ))}
        </main>
      </div>
      <BrandMark />
    </div>
  );
}
